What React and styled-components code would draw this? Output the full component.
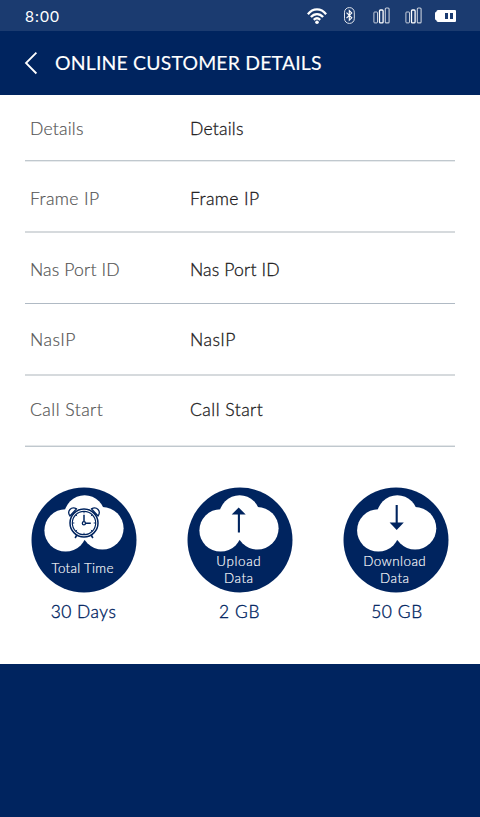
import React from "react";
import styled, { createGlobalStyle } from "styled-components";

const navy = "#00245f";

const GlobalStyle = createGlobalStyle`
  * { box-sizing: border-box; }
  body { margin: 0; background: #fff; font-family: Lato, "Liberation Sans", sans-serif; }
`;

const Screen = styled.div`
  width: 480px;
  height: 817px;
  display: flex;
  flex-direction: column;
  background: #fff;
  overflow: hidden;
`;

const StatusBar = styled.div`
  height: 31px;
  flex: none;
  display: flex;
  align-items: center;
  justify-content: space-between;
  padding: 0 24px 0 25px;
  background: #1b3b70;
  color: #fff;
`;

const Clock = styled.span`
  font-size: 15.5px;
  line-height: 20px;
  letter-spacing: 1.05px;
`;

const StatusIcons = styled.div`
  display: flex;
  align-items: center;
`;

const StatusIcon = styled.svg`
  display: block;
  flex: none;
  overflow: visible;
  margin-left: ${(p) => p.$gap || 0}px;
`;

const Header = styled.header`
  height: 64px;
  flex: none;
  display: flex;
  align-items: center;
  padding-left: 24px;
  background: ${navy};
  color: #fff;
`;

const BackIcon = styled.svg`
  display: block;
  margin-right: 17px;
`;

const Title = styled.h1`
  margin: 0;
  font-size: 19.4px;
  line-height: 24px;
  font-weight: 400;
  white-space: nowrap;
  letter-spacing: ${(p) => p.$spacing}px;
  -webkit-text-stroke: 0.15px #fff;
`;

const DetailList = styled.div`
  padding: 0 25px;
  height: 352px;
  flex: none;
`;

const DetailRow = styled.div`
  height: ${(p) => p.$height}px;
  display: grid;
  grid-template-columns: 160px 1fr;
  padding: ${(p) => p.$top}px 0 0 5px;
  background: linear-gradient(${(p) => p.$upper} 50%, ${(p) => p.$lower} 50%) bottom / 100% 2px no-repeat;
`;

const Cell = styled.span`
  font-size: 17.6px;
  line-height: 22px;
  height: 22px;
  white-space: nowrap;
  font-weight: 300;
  color: ${(p) => (p.$strong ? "#1c1a1b" : "#505050")};
  -webkit-text-stroke: ${(p) => (p.$strong ? "0.3px #1c1a1b" : "0.2px #606060")};
  letter-spacing: ${(p) => p.$spacing}px;
`;

const Stats = styled.div`
  height: 217px;
  flex: none;
  display: grid;
  grid-template-columns: 105px 105px 105px;
  column-gap: 51px;
  padding: 40px 0 0 31px;
`;

const Stat = styled.div`
  display: flex;
  flex-direction: column;
  align-items: center;
`;

const Disc = styled.div`
  width: 105px;
  height: 105px;
  flex: none;
  border-radius: 50%;
  background: ${navy};
  display: flex;
  flex-direction: column;
  align-items: center;
  transform: translate(0.5px, 0.5px);
`;

const Cloud = styled.svg`
  display: block;
  flex: none;
`;

const DiscLabel = styled.div`
  padding-top: ${(p) => p.$top}px;
  padding-right: 3px;
  font-size: 13.4px;
  line-height: 17px;
  font-weight: 300;
  color: #fff;
  -webkit-text-stroke: 0.15px #fff;
  text-align: center;
  white-space: nowrap;
`;

const LabelLine = styled.div`
  letter-spacing: ${(p) => p.$spacing}px;
  margin-right: -${(p) => p.$spacing}px;
`;

const StatValue = styled.div`
  margin-top: 9px;
  font-size: 17.4px;
  line-height: 22px;
  font-weight: 300;
  color: ${navy};
  -webkit-text-stroke: 0.35px ${navy};
  white-space: nowrap;
  letter-spacing: ${(p) => p.$spacing}px;
  padding-left: ${(p) => p.$shift || 0}px;
`;

const Footer = styled.footer`
  flex: 1;
  background: ${navy};
`;

const Signal = ({ gap }) => (
  <StatusIcon $gap={gap} width="17" height="17" viewBox="0 0 17 17" fill="none" stroke="#fff">
    <rect x="0.9" y="5" width="3.6" height="10.9" rx="0.8" strokeWidth="1" opacity="0.75" />
    <rect x="6.5" y="3" width="3.6" height="12.9" rx="1" strokeWidth="1.3" />
    <rect x="12.3" y="1" width="3.8" height="14.9" rx="1" strokeWidth="1.1" opacity="0.75" />
  </StatusIcon>
);

const Clockface = () => (
  <g fill="none" stroke={navy} strokeWidth="1.3" transform="translate(0.1 0.9)">
    <circle cx="52.4" cy="34.6" r="14" strokeWidth="1.5" />
    <circle cx="52.4" cy="34.6" r="11.7" strokeWidth="1.2" />
    <path d="M38.3 27.6 C35 22.8 39.5 17.6 45 20.4 Z M66.5 27.6 C69.8 22.8 65.3 17.6 59.8 20.4 Z" strokeLinejoin="round" />
    <path d="M45.3 46.6 L43.5 49.6 M59.5 46.6 L61.3 49.6" strokeWidth="1.6" />
    <path d="M52.4 26.4 V33.1 M54.1 34.9 H59.2" strokeWidth="1.5" />
    <circle cx="52.3" cy="34.9" r="1.6" />
    <path d="M52.4 23.2 V24.9 M52.4 44.4 V46.1 M40.9 34.6 H42.7 M62.1 34.6 H63.9 M44.4 26.6 L45.5 27.7 M60.4 26.6 L59.3 27.7 M44.4 42.6 L45.5 41.5 M60.4 42.6 L59.3 41.5" strokeWidth="0.9" />
  </g>
);

const UpArrow = () => (
  <g>
    <path d="M51.2 20 L58.2 27 H44.2 Z" fill={navy} />
    <path d="M51.4 26 V45" stroke={navy} strokeWidth="2.1" />
  </g>
);

const DownArrow = () => (
  <g>
    <path d="M53.2 42.4 L60.3 35 H46.1 Z" fill={navy} />
    <path d="M53.2 17.4 V37" stroke={navy} strokeWidth="2.1" />
  </g>
);

const glyphs = { clock: Clockface, up: UpArrow, down: DownArrow };
const cloudShift = { clock: 0.2, up: -0.8, down: 0.9 };

const CloudIcon = ({ kind }) => {
  const Glyph = glyphs[kind];
  return (
    <Cloud width="105" height="65" viewBox="0 0 105 65">
      <g fill="#fff" transform={`translate(${cloudShift[kind]} 0)`}>
        <circle cx="33.9" cy="42.9" r="21.2" />
        <circle cx="70.7" cy="40.8" r="21.2" />
        <circle cx="52.9" cy="28.1" r="20.4" />
        <path d="M40 30 H66 L53 53 Z" />
      </g>
      <Glyph />
    </Cloud>
  );
};

const soft = "#d6dadd";
const details = [
  { text: "Details", height: 67, top: 23, upper: "#c0c8ce", lower: "#e8ebed", spacing: 0.2 },
  { text: "Frame IP", height: 71, top: 26, upper: soft, lower: soft, spacing: 0.36 },
  { text: "Nas Port ID", height: 71, top: 26, upper: "#fff", lower: "#b0bac4", spacing: 0.14 },
  { text: "NasIP", height: 72, top: 25, upper: soft, lower: soft, spacing: 0.5 },
  { text: "Call Start", height: 71, top: 23, upper: "#e4e7e9", lower: "#c0c8ce", spacing: 0.45 },
];

const stats = [
  { kind: "clock", lines: [["Total Time", 0.3]], top: 7, value: "30 Days", spacing: 0.5 },
  { kind: "up", lines: [["Upload", 0.65], ["Data", 0.55]], top: 0, value: "2 GB", spacing: 0.6 },
  { kind: "down", lines: [["Download", 0.45], ["Data", 0.55]], top: 0, value: "50 GB", spacing: 0.6, shift: 3 },
];

export default function App() {
  return (
    <Screen>
      <GlobalStyle />
      <StatusBar>
        <Clock>8:00</Clock>
        <StatusIcons>
          <StatusIcon width="20" height="16" viewBox="0 0 20 16" fill="none" stroke="#fff" strokeWidth="2.3">
            <path d="M0.9 6.2 C6 -0.2 14 -0.2 19.1 6.2" />
            <path d="M3.9 9.1 C7.4 5.1 12.6 5.1 16.1 9.1" />
            <path d="M6.8 11.9 C8.8 9.9 11.2 9.9 13.2 11.9" />
            <circle cx="10" cy="14.2" r="1.8" fill="#fff" stroke="none" />
          </StatusIcon>
          <StatusIcon $gap={17} width="11" height="17" viewBox="0 0 11 17" fill="none" stroke="#fff">
            <rect x="0.5" y="0.6" width="9.8" height="15.8" rx="4.7" strokeWidth="1" opacity="0.85" />
            <path d="M2.5 5.6 L7.8 10.8 L5.3 13.2 V3.6 L7.8 6 L2.5 11.2" strokeWidth="1.1" />
          </StatusIcon>
          <Signal gap={18} />
          <Signal gap={15} />
          <StatusIcon $gap={13} width="21" height="12" viewBox="0 0 21 12">
            <path d="M3 0 H20 Q21 0 21 1 V11 Q21 12 20 12 H3 Q1.6 12 1.3 10.3 Q0 10 0 8.6 V3.4 Q0 2 1.3 1.7 Q1.6 0 3 0 Z" fill="#fff" />
            <path d="M10 3 H13 V9 H10 Z M15 3 H18 V9 H15 Z" fill="#1b3b70" />
          </StatusIcon>
        </StatusIcons>
      </StatusBar>
      <Header>
        <BackIcon width="14" height="24" viewBox="0 0 14 24" fill="none" stroke="#fff" strokeWidth="1.8">
          <path d="M12.4 1.6 L2 12 L12.4 22.5" />
        </BackIcon>
        <Title $spacing={0.2}>ONLINE CUSTOMER DETAILS</Title>
      </Header>
      <DetailList>
        {details.map((d) => (
          <DetailRow key={d.text} $height={d.height} $top={d.top} $upper={d.upper} $lower={d.lower}>
            <Cell $spacing={d.spacing}>{d.text}</Cell>
            <Cell $strong $spacing={d.spacing}>{d.text}</Cell>
          </DetailRow>
        ))}
      </DetailList>
      <Stats>
        {stats.map((s) => (
          <Stat key={s.kind}>
            <Disc>
              <CloudIcon kind={s.kind} />
              <DiscLabel $top={s.top}>
                {s.lines.map(([text, spacing]) => (
                  <LabelLine key={text} $spacing={spacing}>{text}</LabelLine>
                ))}
              </DiscLabel>
            </Disc>
            <StatValue $spacing={s.spacing} $shift={s.shift}>{s.value}</StatValue>
          </Stat>
        ))}
      </Stats>
      <Footer />
    </Screen>
  );
}
